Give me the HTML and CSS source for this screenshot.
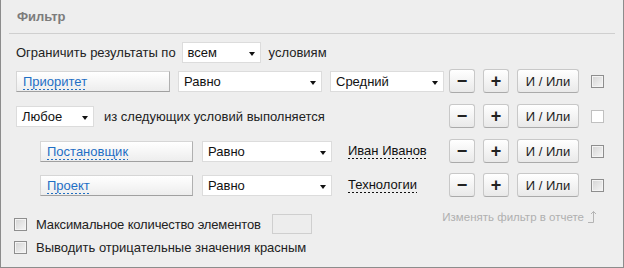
FILE: index.html
```html
<!DOCTYPE html>
<html lang="ru">

<head>
	<meta charset="UTF-8">
	<title>Фильтр</title>
	<link rel="stylesheet" href="styles.css">
</head>

<body>
	<div class="panel">
		<div class="header">Фильтр</div>
		<div class="content">
			<div class="row row-limit">
				<span class="text">Ограничить результаты по</span>
				<div class="select select-all">всем</div>
				<span class="text">условиям</span>
			</div>

			<div class="row">
				<div class="field field-wide"><a href="#" class="dashed link">Приоритет</a></div>
				<div class="select select-op">Равно</div>
				<div class="select select-value">Средний</div>
				<div class="actions">
					<button class="btn btn-sign">−</button>
					<button class="btn btn-sign">+</button>
					<button class="btn btn-andor">И / Или</button>
					<span class="check"></span>
				</div>
			</div>

			<div class="row">
				<div class="select select-any">Любое</div>
				<span class="text group-text">из следующих условий выполняется</span>
				<div class="actions">
					<button class="btn btn-sign">−</button>
					<button class="btn btn-sign">+</button>
					<button class="btn btn-andor">И / Или</button>
					<span class="check check-light"></span>
				</div>
			</div>

			<div class="row row-nested">
				<div class="field"><a href="#" class="dashed link">Постановщик</a></div>
				<div class="select select-op-small">Равно</div>
				<span class="dashed value">Иван Иванов</span>
				<div class="actions">
					<button class="btn btn-sign">−</button>
					<button class="btn btn-sign">+</button>
					<button class="btn btn-andor">И / Или</button>
					<span class="check"></span>
				</div>
			</div>

			<div class="row row-nested">
				<div class="field"><a href="#" class="dashed link">Проект</a></div>
				<div class="select select-op-small">Равно</div>
				<span class="dashed value">Технологии</span>
				<div class="actions">
					<button class="btn btn-sign">−</button>
					<button class="btn btn-sign">+</button>
					<button class="btn btn-andor">И / Или</button>
					<span class="check"></span>
				</div>
			</div>

			<div class="bottom">
				<div class="options">
					<label class="option">
						<span class="check"></span>
						<span class="text text-tight">Максимальное количество элементов</span>
						<span class="count-input"></span>
					</label>
					<label class="option">
						<span class="check"></span>
						<span class="text">Выводить отрицательные значения красным</span>
					</label>
				</div>
				<div class="hint">
					<span>Изменять фильтр в отчете</span>
					<svg width="10" height="13" viewBox="0 0 10 13">
						<path d="M1 12.5 H6.5 V1.5 M4 4 L6.5 1.5 L9 4" fill="none" stroke="#b4b4b4" stroke-width="1" />
					</svg>
				</div>
			</div>
		</div>
	</div>
</body>

</html>
```

FILE: styles.css
```css
* {
	box-sizing: border-box;
}

body {
	margin: 0;
	font-family: 'Liberation Sans', Arial, sans-serif;
	font-size: 13px;
	color: #222;
}

.panel {
	width: 624px;
	height: 268px;
	background-color: #eeeeee;
	border: 1px solid #8c8c8c;
	border-top: none;
}

.header {
	margin: 0 8px;
	height: 34px;
	line-height: 34px;
	padding-left: 8px;
	border-bottom: 1px solid #cfcfcf;
	font-weight: 700;
	color: #7c7c7c;
}

.content {
	padding: 0 19px 0 15px;
}

.row {
	display: flex;
	align-items: center;
	height: 24px;
	margin-top: 11px;
}

.row-limit {
	height: 21px;
	margin-top: 8px;
	gap: 6px;
}

.row-limit .select {
	margin-right: 2px;
}

.row-limit+.row {
	margin-top: 6px;
}

.row-nested {
	padding-left: 24px;
}

.row-nested+.row-nested {
	margin-top: 10px;
}

.select {
	position: relative;
	height: 21px;
	line-height: 20px;
	padding-left: 5px;
	background-color: #fff;
	border: 1px solid #dcdcdc;
	color: #111;
}

.select::after {
	content: '';
	position: absolute;
	right: 5px;
	top: 9px;
	border-left: 3.5px solid transparent;
	border-right: 3.5px solid transparent;
	border-top: 4px solid #111;
}

.select-all {
	width: 79px;
}

.select-op {
	width: 144px;
	margin-left: 8px;
}

.select-value {
	width: 114px;
	margin-left: 8px;
}

.select-any {
	width: 78px;
}

.select-op-small {
	width: 130px;
	margin-left: 9px;
}

.group-text {
	margin-left: 10px;
}

.field {
	width: 153px;
	height: 21px;
	line-height: 20px;
	padding-left: 6px;
	background: linear-gradient(#ffffff, #ededed);
	border: 1px solid #d6d6d6;
	border-right-color: #b0b0b0;
	border-bottom-color: #a0a0a0;
}

.field-wide {
	width: 154px;
}

.dashed {
	padding-bottom: 1px;
	background-image: linear-gradient(to right, currentColor 50%, transparent 50%);
	background-position: left bottom;
	background-size: 4px 1px;
	background-repeat: repeat-x;
	text-decoration: none;
}

.link {
	color: #1f6fc5;
}

.value {
	margin-left: 16px;
	color: #111;
}

.actions {
	display: flex;
	align-items: center;
	margin-left: auto;
}

.btn {
	height: 24px;
	padding: 0;
	font-family: inherit;
	font-size: 13px;
	color: #222;
	background: linear-gradient(#ffffff, #e9e9e9);
	border: 1px solid #c8c8c8;
	border-bottom-color: #aaaaaa;
	border-radius: 3px;
	cursor: pointer;
}

.btn+.btn {
	margin-left: 8px;
}

.btn-sign {
	width: 26px;
	font-size: 18px;
	font-weight: 700;
	line-height: 20px;
}

.btn-andor {
	width: 62px;
}

.check {
	display: inline-block;
	width: 13px;
	height: 13px;
	border: 1px solid #8e8e8e;
	background: linear-gradient(135deg, #d4d4d4, #f6f6f6);
	box-shadow: inset 0 0 0 1px #f4f4f4;
	flex-shrink: 0;
}

.actions .check {
	margin-left: 12px;
}

.check-light {
	border-color: #c0c0c0;
	background: #fff;
	box-shadow: none;
}

.bottom {
	display: flex;
	justify-content: space-between;
	margin-top: 17px;
}

.options {
	display: flex;
	flex-direction: column;
	margin-left: -2px;
}

.option {
	display: flex;
	align-items: center;
	height: 20px;
}

.option+.option {
	margin-top: 6px;
	height: 14px;
}

.option .text {
	margin-left: 9px;
}

.text-tight {
	letter-spacing: -0.15px;
}

.count-input {
	width: 40px;
	height: 20px;
	margin-left: 11px;
	border: 1px solid #cfcfcf;
	background-color: #ededed;
}

.hint {
	display: flex;
	align-items: flex-end;
	gap: 3px;
	margin-right: 7px;
	margin-top: -4px;
	align-self: flex-start;
	font-size: 11.5px;
	color: #b0b0b0;
}
```
